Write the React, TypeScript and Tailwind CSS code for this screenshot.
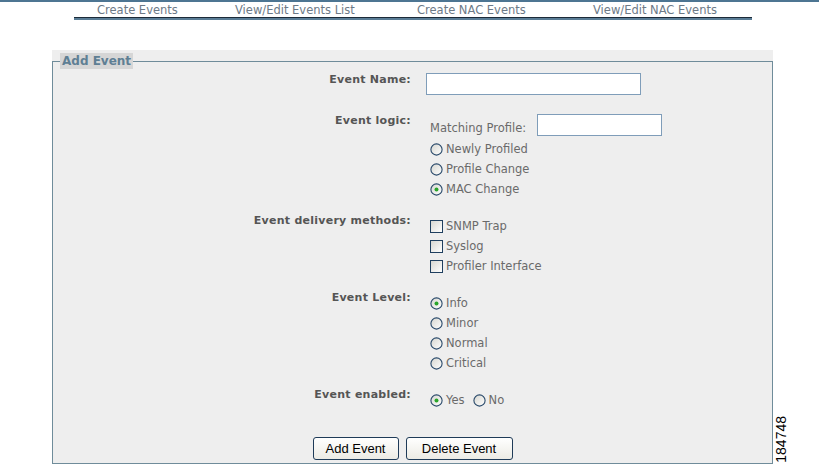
import React from "react";

const Radio = ({ checked = false }: { checked?: boolean }) => (
  <svg width="13" height="13" viewBox="0 0 13 13" className="shrink-0">
    <defs>
      <linearGradient id="rg" x1="0" y1="0" x2="1" y2="1">
        <stop offset="0" stopColor="#d6d6d0" />
        <stop offset="1" stopColor="#ffffff" />
      </linearGradient>
    </defs>
    <circle cx="6.5" cy="6.5" r="5.6" fill="url(#rg)" stroke="#29496a" strokeWidth="1.1" />
    {checked && <circle cx="6.5" cy="6.5" r="2" fill="#2aa52a" />}
  </svg>
);

const Check = () => (
  <span className="inline-block w-[13px] h-[13px] shrink-0 border border-[#1f3f5f] bg-gradient-to-br from-[#d8d8d2] to-white" />
);

const RadioItem = ({ label, checked }: { label: string; checked?: boolean }) => (
  <div className="h-5 flex items-center pl-[4px]">
    <Radio checked={checked} />
    <span className="ml-[3px] pt-[1px]">{label}</span>
  </div>
);

const CheckItem = ({ label }: { label: string }) => (
  <div className="h-5 flex items-center pl-[4px]">
    <Check />
    <span className="ml-[3px] pt-[1px]">{label}</span>
  </div>
);

const Label = ({ children }: { children: React.ReactNode }) => (
  <div className="w-[358px] shrink-0 text-right font-bold text-[11px] text-[#555555] leading-[13px] tracking-[0.25px]">{children}</div>
);

export default function App() {
  return (
    <div className="relative w-[819px] h-[472px] bg-white overflow-hidden text-[11px] font-['DejaVu_Sans',sans-serif]">
      <div className="h-[2px] bg-[#4d7592]" />
      <div className="ml-[74px] w-[678px]">
        <div className="flex h-[15px] items-center pt-[1px] text-[#6d7a87] text-[11.5px] leading-[15px]">
          <div className="w-[161px] pl-[23px]">Create Events</div>
          <div className="w-[182px]">View/Edit Events List</div>
          <div className="w-[176px]">Create NAC Events</div>
          <div className="flex-1">View/Edit NAC Events</div>
        </div>
        <div className="h-[1px] bg-[#1c2b39]" />
        <div className="h-[2px] bg-[#5a7d96]" />
      </div>

      <div className="ml-[52px] mt-[30px] w-[721px] bg-[#eeeeee] pt-[3px]">
        <fieldset className="border border-[#6f8c9a] pb-[3px]">
          <legend className="ml-[7px] px-[2px] bg-[#d6d6d6] text-[#5f7f94] font-bold text-[12px] leading-[16px]">
            Add Event
          </legend>

          <div className="text-[#6a6a6a] text-[11.5px]">
            <div className="flex items-start mt-[4px]">
              <Label>Event Name:</Label>
              <input className="ml-[15px] w-[215px] h-[22px] border border-[#7f9db9] bg-white outline-none" />
            </div>

            <div className="flex items-start mt-[19px]">
              <Label>Event logic:</Label>
              <div className="ml-[15px]">
                <div className="flex items-end">
                  <span className="w-[111px] pl-[4px] leading-[13px] pb-[1px]">Matching Profile:</span>
                  <input className="w-[125px] h-[22px] border border-[#7f9db9] bg-white outline-none" />
                </div>
                <div className="mt-[3px]">
                  <RadioItem label="Newly Profiled" />
                  <RadioItem label="Profile Change" />
                  <RadioItem label="MAC Change" checked />
                </div>
              </div>
            </div>

            <div className="flex items-start mt-[15px]">
              <Label>Event delivery methods:</Label>
              <div className="ml-[15px] mt-[2px]">
                <CheckItem label="SNMP Trap" />
                <CheckItem label="Syslog" />
                <CheckItem label="Profiler Interface" />
              </div>
            </div>

            <div className="flex items-start mt-[15px]">
              <Label>Event Level:</Label>
              <div className="ml-[15px] mt-[2px]">
                <RadioItem label="Info" checked />
                <RadioItem label="Minor" />
                <RadioItem label="Normal" />
                <RadioItem label="Critical" />
              </div>
            </div>

            <div className="flex items-start mt-[15px]">
              <Label>Event enabled:</Label>
              <div className="ml-[15px] mt-[2px] flex">
                <RadioItem label="Yes" checked />
                <div className="h-5 flex items-center ml-[8px]">
                  <Radio />
                  <span className="ml-[3px] pt-[1px]">No</span>
                </div>
              </div>
            </div>

            <div className="flex justify-center gap-[7px] mt-[27px] font-['Liberation_Sans',sans-serif] text-[13px] text-black">
              <button className="w-[86px] h-[23px] rounded-[3px] border border-[#1f3b58] bg-gradient-to-b from-white to-[#ecebe4] leading-none">
                Add Event
              </button>
              <button className="w-[107px] h-[23px] rounded-[3px] border border-[#1f3b58] bg-gradient-to-b from-white to-[#ecebe4] leading-none">
                Delete Event
              </button>
            </div>
          </div>
        </fieldset>
      </div>

      <div className="absolute left-[774px] top-[416px] [writing-mode:vertical-rl] rotate-180 font-['Liberation_Sans',sans-serif] text-[14px] leading-[15px] text-black">
        184748
      </div>
    </div>
  );
}
